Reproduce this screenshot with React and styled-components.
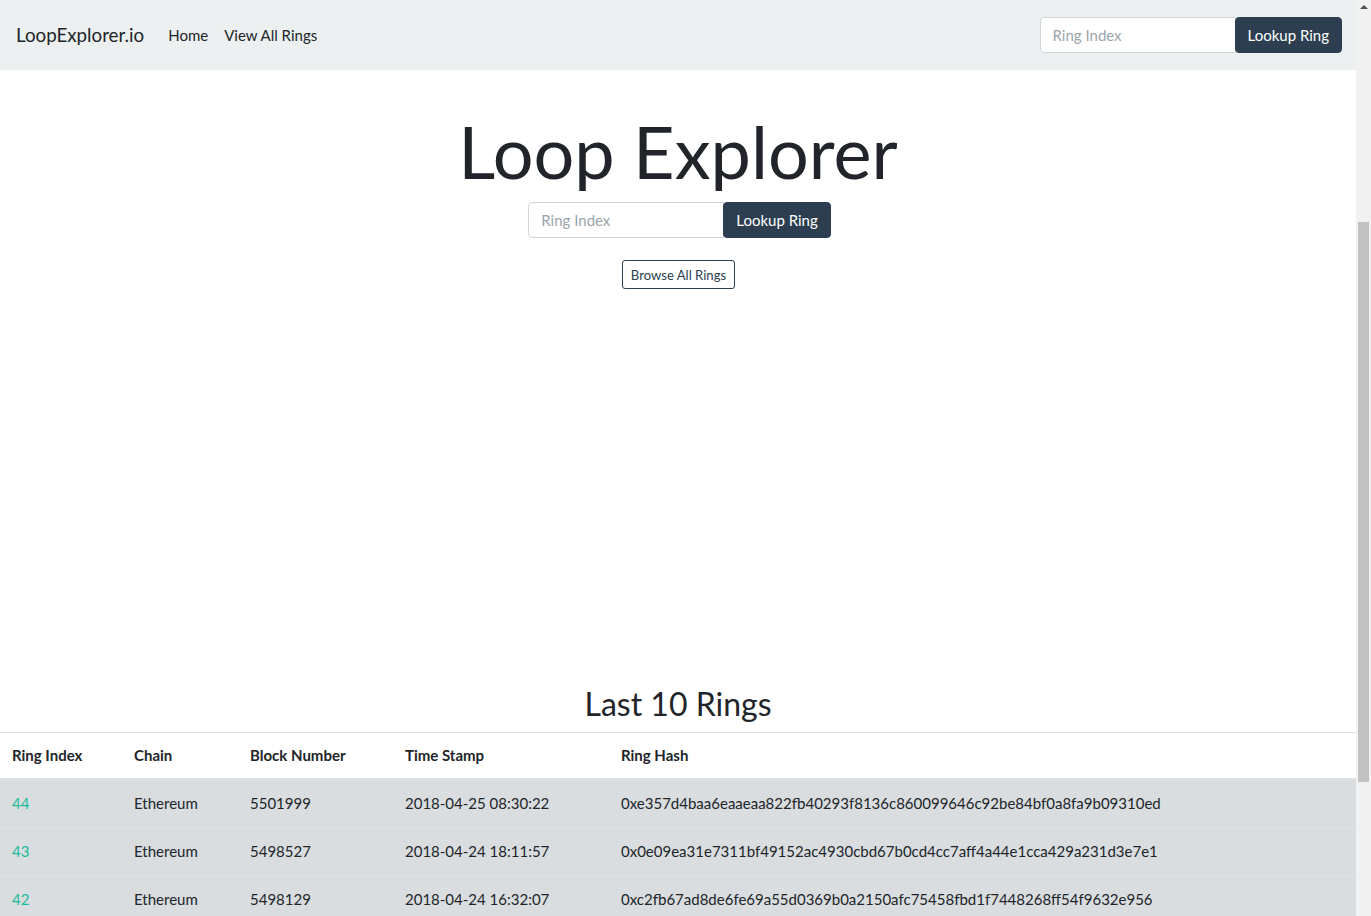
import React from "react";
import styled, { createGlobalStyle } from "styled-components";

const GlobalStyle = createGlobalStyle`
  html { font-size: 16px; }
  body {
    margin: 0;
    font-family: Lato, "Noto Sans", sans-serif;
    font-size: 15px;
    line-height: 1.5;
    color: #212529;
    background: #fff;
    overflow: hidden;
  }
  *, *::before, *::after { box-sizing: border-box; }
`;

const Page = styled.div`
  display: flex;
  height: 100vh;
`;

const Content = styled.div`
  flex: 1;
  min-width: 0;
  overflow: hidden;
`;

const ScrollRail = styled.div`
  width: 15px;
  flex-shrink: 0;
  background: #f1f1f1;
  display: flex;
  flex-direction: column;
  align-items: center;
`;

const ScrollArrow = styled.div`
  margin-top: 5px;
  width: 0;
  height: 0;
  border-left: 4px solid transparent;
  border-right: 4px solid transparent;
  border-bottom: 4px solid #505050;
`;

const ScrollThumb = styled.div`
  margin-top: 213px;
  width: 11px;
  height: 560px;
  background: #c1c1c1;
`;

const Navbar = styled.nav`
  display: flex;
  align-items: center;
  height: 70px;
  padding: 0 14px 0 16px;
  background: #ecf0f1;
`;

const Brand = styled.a`
  font-size: 18.75px;
  line-height: 1.5;
  color: #212529;
  text-decoration: none;
  margin-right: 16px;
`;

const NavList = styled.div`
  display: flex;
  flex: 1;
`;

const NavLink = styled.a`
  padding: 8px;
  color: #212529;
  text-decoration: none;
  font-size: 15px;
`;

const InputGroup = styled.form`
  display: flex;
  justify-content: ${(p) => (p.$center ? "center" : "flex-start")};
  margin: 0 0 0 ${(p) => (p.$center ? "3px" : "0")};
`;

const TextInput = styled.input`
  width: 196px;
  height: 36px;
  padding: 6px 12px;
  font-family: Lato, sans-serif;
  font-size: 15px;
  color: #495057;
  border: 1px solid #ced4da;
  border-radius: 4px 0 0 4px;
  background: #fff;
  outline: none;
  &::placeholder { color: #9aa5ab; }
`;

const PrimaryButton = styled.button`
  height: 36px;
  padding: 0 12px;
  font-family: Lato, sans-serif;
  font-size: 15px;
  color: #fff;
  background: #2c3e50;
  border: 1px solid #2c3e50;
  border-radius: 4px;
  margin-left: -1px;
`;

const Main = styled.main`
  display: flex;
  flex-direction: column;
  align-items: center;
`;

const Title = styled.h1`
  margin: 38px 0 8px;
  font-size: 72px;
  font-weight: 400;
  line-height: 1.2;
  color: #212529;
`;

const OutlineButton = styled.button`
  margin: 22px 0 0 1px;
  height: 29px;
  padding: 0 8px;
  font-family: Lato, sans-serif;
  font-size: 13.1px;
  color: #2c3e50;
  background: transparent;
  border: 1px solid #2c3e50;
  border-radius: 3px;
`;

const SectionTitle = styled.h2`
  margin: 396px 0 8px;
  font-size: 32px;
  font-weight: 400;
  line-height: 1.2;
`;

const Table = styled.table`
  width: 100%;
  border-collapse: collapse;
  font-size: 15px;
`;

const Th = styled.th`
  text-align: left;
  font-weight: 700;
  padding: 12px;
  line-height: 21px;
  border-top: 1px solid #dee2e6;
  border-bottom: 2px solid #dee2e6;
  width: ${(p) => p.$w || "auto"};
`;

const Tr = styled.tr`
  background: #d9dde0;
`;

const Td = styled.td`
  padding: 12px;
  line-height: 23px;
  border-top: 1px solid #dee2e6;
  vertical-align: top;
`;

const RingLink = styled.a`
  color: #18bc9c;
  text-decoration: none;
`;

const rows = [
  ["44", "5501999", "2018-04-25 08:30:22", "0xe357d4baa6eaaeaa822fb40293f8136c860099646c92be84bf0a8fa9b09310ed"],
  ["43", "5498527", "2018-04-24 18:11:57", "0x0e09ea31e7311bf49152ac4930cbd67b0cd4cc7aff4a44e1cca429a231d3e7e1"],
  ["42", "5498129", "2018-04-24 16:32:07", "0xc2fb67ad8de6fe69a55d0369b0a2150afc75458fbd1f7448268ff54f9632e956"],
];

export default function App() {
  return (
    <Page>
      <GlobalStyle />
      <Content>
        <Navbar>
          <Brand href="#">LoopExplorer.io</Brand>
          <NavList>
            <NavLink href="#">Home</NavLink>
            <NavLink href="#">View All Rings</NavLink>
          </NavList>
          <InputGroup onSubmit={(e) => e.preventDefault()}>
            <TextInput placeholder="Ring Index" />
            <PrimaryButton type="submit">Lookup Ring</PrimaryButton>
          </InputGroup>
        </Navbar>
        <Main>
          <Title>Loop Explorer</Title>
          <InputGroup $center onSubmit={(e) => e.preventDefault()}>
            <TextInput placeholder="Ring Index" />
            <PrimaryButton type="submit">Lookup Ring</PrimaryButton>
          </InputGroup>
          <OutlineButton>Browse All Rings</OutlineButton>
          <SectionTitle>Last 10 Rings</SectionTitle>
        </Main>
        <Table>
          <thead>
            <tr>
              <Th $w="122px">Ring Index</Th>
              <Th $w="116px">Chain</Th>
              <Th $w="155px">Block Number</Th>
              <Th $w="216px">Time Stamp</Th>
              <Th>Ring Hash</Th>
            </tr>
          </thead>
          <tbody>
            {rows.map((r) => (
              <Tr key={r[0]}>
                <Td><RingLink href="#">{r[0]}</RingLink></Td>
                <Td>Ethereum</Td>
                <Td>{r[1]}</Td>
                <Td>{r[2]}</Td>
                <Td>{r[3]}</Td>
              </Tr>
            ))}
          </tbody>
        </Table>
      </Content>
      <ScrollRail>
        <ScrollArrow />
        <ScrollThumb />
      </ScrollRail>
    </Page>
  );
}
